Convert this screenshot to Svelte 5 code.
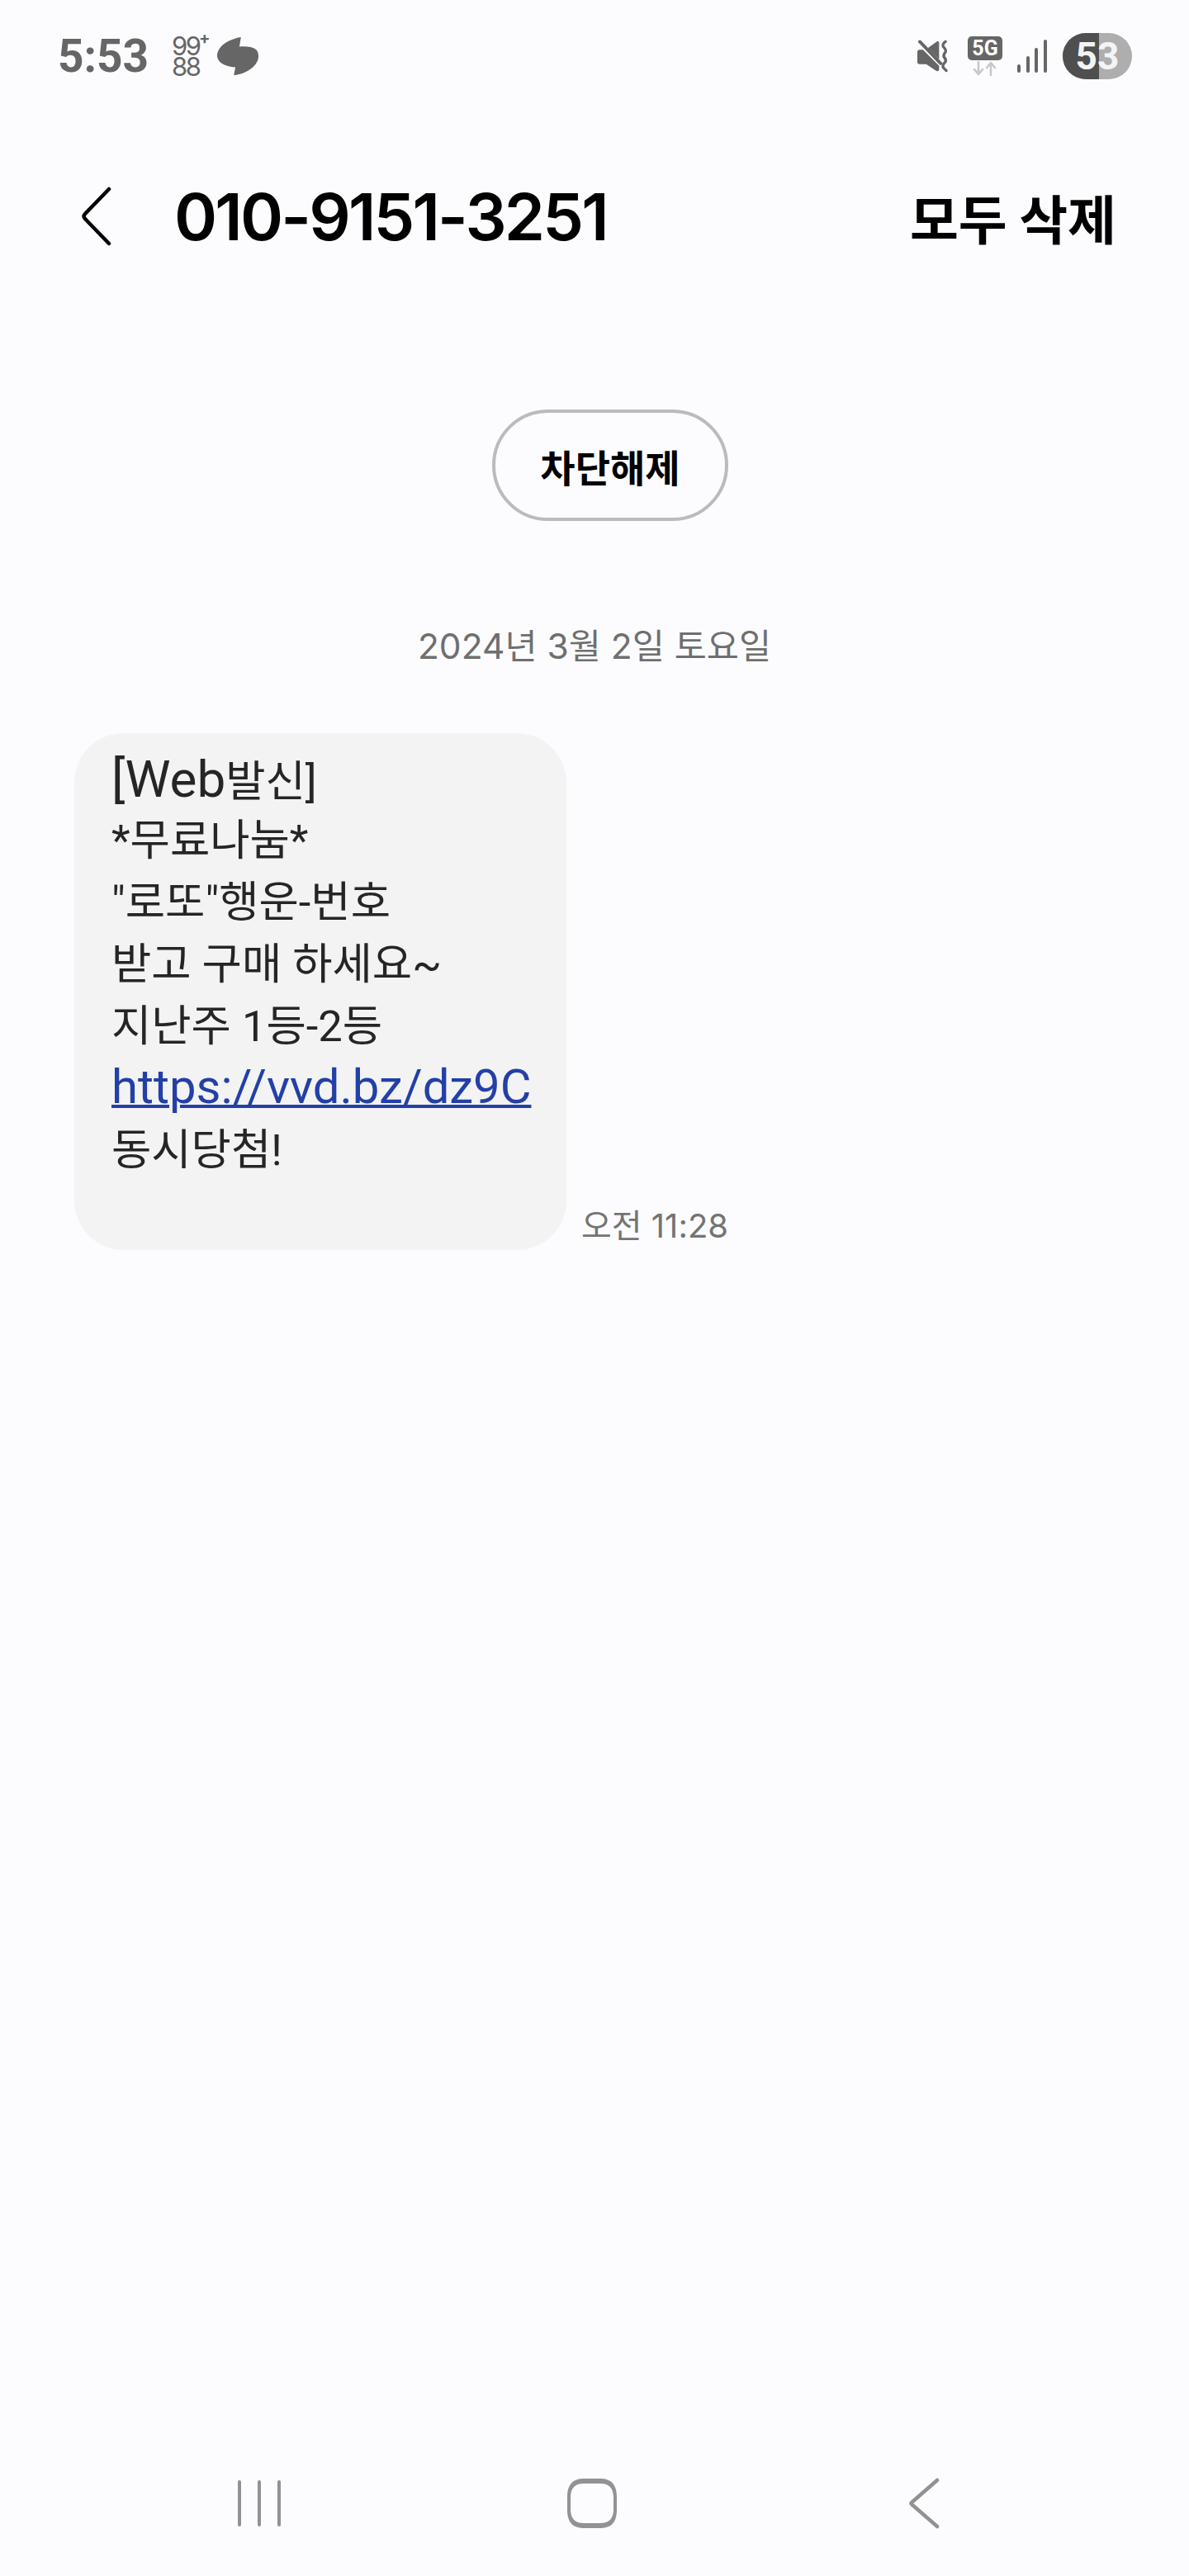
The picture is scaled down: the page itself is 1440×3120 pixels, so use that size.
<script>
  const lines = ['*무료나눔*', '"로또"행운-번호', '받고 구매 하세요~', '지난주 1등-2등'];
</script>

<div class="screen">
  <header class="status">
    <div class="status-left">
      <span class="clock">5:53</span>
      <span class="num-icon" aria-hidden="true">
        <span class="plus">+</span>
        <span>99</span>
        <span>88</span>
      </span>
      <svg class="talk" viewBox="0 0 54 50" aria-hidden="true">
        <path d="M31 1 C14 4 1 13 1 25 C2 33 10 38 24 39 L22 49 C40 47 53 36 53 25 C53 16 47 12 29 13 Z" fill="#666" />
      </svg>
    </div>
    <div class="status-right">
      <svg class="mute" viewBox="0 0 40 40" aria-hidden="true">
        <path d="M0 15 Q0 12 3 12 L7 12 L27 32 L27 37 Q26 40 23 38 L11 30 L3 30 Q0 30 0 27 Z M13 10 L24 2 Q27 0 27 4 L27 24 Z" fill="#666" />
        <path d="M3 2 L29 29" stroke="#666" stroke-width="4" stroke-linecap="round" />
        <path d="M35 2 Q31 5 32 8 Q36 12 35 15 Q32 18 33 21 Q36 24 35 27 Q31 30 32 34 L36 38" fill="none" stroke="#666" stroke-width="3.4" stroke-linecap="round" />
      </svg>
      <span class="net">
        <span class="fiveg">5G</span>
        <svg viewBox="0 0 30 18" aria-hidden="true">
          <path d="M7 1 V15 M2 10 L7 16 L12 10 M22 17 V2 M17 8 L22 2 L27 8" fill="none" stroke="#c8c8c8" stroke-width="2.6" stroke-linecap="round" stroke-linejoin="round" />
        </svg>
      </span>
      <svg class="signal" viewBox="0 0 36 40" aria-hidden="true">
        <rect x="0" y="30" width="4" height="10" rx="2" />
        <rect x="11" y="20" width="4" height="20" rx="2" />
        <rect x="21" y="10" width="4" height="30" rx="2" />
        <rect x="32" y="0" width="4" height="40" rx="2" />
      </svg>
      <span class="battery"><span class="fill"></span><span class="level">53</span></span>
    </div>
  </header>

  <nav class="top">
    <svg class="back" viewBox="0 0 40 72" aria-hidden="true">
      <path d="M36 3 L7 33 Q4 36 7 39 L36 69" fill="none" stroke="#000" stroke-width="4.5" stroke-linecap="round" stroke-linejoin="round" />
    </svg>
    <h1>010-9151-3251</h1>
    <button type="button" class="delete-all">모두 삭제</button>
  </nav>

  <div class="unblock-row">
    <button type="button" class="unblock">차단해제</button>
  </div>

  <p class="date">2024년 3월 2일 토요일</p>

  <div class="message">
    <div class="bubble">
      <div class="first"><span class="latin">[Web</span>발신]</div>
      {#each lines as line}
        <div>{line}</div>
      {/each}
      <div><a href="#link">https://vvd.bz/dz9C</a></div>
      <div>동시당첨!</div>
    </div>
    <span class="time">오전 11:28</span>
  </div>

  <footer class="softkeys">
    <svg class="recents" viewBox="0 0 52 56" aria-hidden="true">
      <rect x="0" y="0" width="4" height="56" rx="2" />
      <rect x="24" y="0" width="4" height="56" rx="2" />
      <rect x="48" y="0" width="4" height="56" rx="2" />
    </svg>
    <svg class="home" viewBox="0 0 60 60" aria-hidden="true">
      <path fill-rule="evenodd" fill="#929292" d="M20 0 H40 C54 0 60 8 60 22 V38 C60 52 54 60 40 60 H20 C6 60 0 52 0 38 V22 C0 8 6 0 20 0 Z M20 6 C9 6 4 12 4 23 V37 C4 48 9 54 20 54 H40 C51 54 56 48 56 37 V23 C56 12 51 6 40 6 Z" />
    </svg>
    <svg class="navback" viewBox="0 0 38 62" aria-hidden="true">
      <path d="M35 3 L4 30 Q3 31 4 32 L35 59" fill="none" stroke="#929292" stroke-width="4.5" stroke-linecap="round" stroke-linejoin="round" />
    </svg>
  </footer>
</div>

<style>
  :global(body) {
    margin: 0;
    background: #fcfcfe;
  }

  .screen {
    width: 1440px;
    height: 3120px;
    display: flex;
    flex-direction: column;
    background: #fcfcfe;
    font-family: Inter, "Noto Sans CJK KR", sans-serif;
    box-sizing: border-box;
  }

  .status {
    height: 68px;
    padding: 34px 69px 0 70px;
    display: flex;
    justify-content: space-between;
    align-items: center;
    flex: none;
  }

  .status-left,
  .status-right {
    display: flex;
    align-items: center;
  }

  .clock {
    font-family: Roboto, sans-serif;
    font-size: 55px;
    font-weight: 700;
    color: #666;
    line-height: 1;
    width: 107px;
  }

  .num-icon {
    position: relative;
    display: flex;
    flex-direction: column;
    margin-left: 31px;
    color: #666;
    font-size: 31px;
    line-height: 25px;
    font-family: Inter, sans-serif;
    letter-spacing: -2.5px;
    width: 39px;
  }

  .plus {
    position: absolute;
    left: 33px;
    top: -7px;
    font-size: 20px;
    line-height: 20px;
    font-weight: 700;
  }

  .talk {
    width: 52px;
    height: 50px;
    margin-left: 15px;
  }

  .mute {
    width: 39px;
    height: 40px;
  }

  .net {
    display: flex;
    flex-direction: column;
    align-items: center;
    margin-left: 22px;
    width: 42px;
  }

  .fiveg {
    width: 42px;
    height: 29px;
    border-radius: 5px;
    background: #666;
    color: #fff;
    font-family: Roboto, sans-serif;
    font-weight: 700;
    font-size: 25px;
    line-height: 29px;
    text-align: center;
  }

  .net svg {
    width: 30px;
    height: 18px;
    margin-top: 1px;
  }

  .signal {
    width: 36px;
    height: 40px;
    margin-left: 18px;
    fill: #666;
  }

  .battery {
    position: relative;
    width: 84px;
    height: 56px;
    margin-left: 19px;
    border-radius: 28px;
    background: #aeaeae;
    overflow: hidden;
    display: flex;
    align-items: center;
    justify-content: center;
  }

  .fill {
    position: absolute;
    left: 0;
    top: 0;
    bottom: 0;
    width: 44px;
    background: #4f4f4f;
  }

  .level {
    position: relative;
    color: #f4f4f4;
    font-family: Roboto, sans-serif;
    font-size: 46px;
    font-weight: 700;
    line-height: 1;
  }

  .top {
    margin-top: 110px;
    height: 100px;
    padding: 0 88px 0 96px;
    display: flex;
    align-items: center;
    flex: none;
  }

  .back {
    width: 40px;
    height: 72px;
    flex: none;
  }

  h1 {
    margin: 0 0 0 75px;
    font-family: Inter, sans-serif;
    font-size: 79px;
    font-weight: 600;
    color: #000;
    letter-spacing: -2.8px;
    line-height: 1;
    flex: 1;
  }

  .delete-all {
    border: 0;
    padding: 0;
    background: none;
    color: #000;
    font-family: "Noto Sans CJK KR", sans-serif;
    font-size: 64px;
    font-weight: 700;
    line-height: 1;
  }

  .unblock-row {
    margin-top: 184px;
    display: flex;
    justify-content: center;
    padding-left: 38px;
    flex: none;
  }

  .unblock {
    width: 286px;
    height: 135px;
    border: 4px solid #bbbbbd;
    border-radius: 68px;
    background: none;
    color: #000;
    font-family: "Noto Sans CJK KR", sans-serif;
    font-size: 46px;
    font-weight: 700;
    padding: 0;
  }

  .date {
    margin: 124px 0 0;
    text-align: center;
    color: #6f6f6f;
    font-size: 42.5px;
    line-height: 56px;
    flex: none;
  }

  .message {
    margin: 77px 0 0 90px;
    display: flex;
    align-items: flex-end;
    gap: 18px;
    flex: none;
  }

  .bubble {
    width: 596px;
    height: 626px;
    box-sizing: border-box;
    padding: 18px 40px 0 45px;
    border-radius: 60px;
    background: #f3f3f3;
    color: #252525;
    font-family: Roboto, "Noto Sans CJK KR", sans-serif;
    font-size: 52.5px;
    line-height: 75px;
    white-space: nowrap;
  }

  .bubble > div {
    height: 75px;
  }

  .bubble > .first {
    height: 71px;
    padding-top: 4px;
  }

  .latin {
    font-size: 62px;
    line-height: 1;
  }

  .bubble a {
    color: #2340a8;
    font-size: 58px;
    line-height: 1;
    text-decoration: underline;
    text-decoration-thickness: 4px;
  }

  .time {
    color: #747474;
    font-size: 40px;
    line-height: 50px;
    margin-bottom: 4px;
  }

  .softkeys {
    margin-top: auto;
    height: 60px;
    margin-bottom: 58px;
    display: flex;
    align-items: center;
    padding: 0 0 0 288px;
    flex: none;
  }

  .recents {
    width: 52px;
    height: 56px;
    fill: #929292;
  }

  .home {
    width: 60px;
    height: 60px;
    margin-left: 347px;
  }

  .navback {
    width: 38px;
    height: 62px;
    margin-left: 353px;
  }
</style>
